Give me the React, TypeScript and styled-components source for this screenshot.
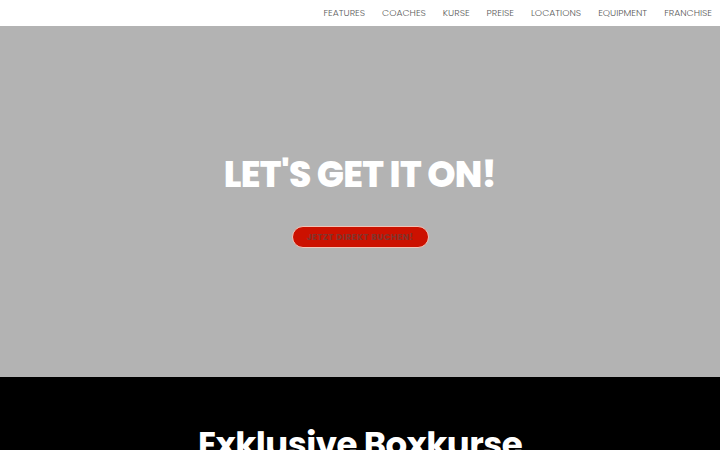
import React from 'react'
import styled, { createGlobalStyle } from 'styled-components'

const navItems = ['Features', 'Coaches', 'Kurse', 'Preise', 'Locations', 'Equipment', 'Franchise']

const GlobalStyle = createGlobalStyle`
  html, body {
    margin: 0;
    padding: 0;
    background: #000;
    font-family: Poppins, Inter, 'Noto Sans', sans-serif;
  }
  * {
    box-sizing: border-box;
  }
`

const App: React.FC = () => {
  return (
    <>
      <GlobalStyle />
      <Header>
        <Nav>
          {navItems.map((item) => (
            <NavLink key={item} href="#">
              {item}
            </NavLink>
          ))}
        </Nav>
      </Header>
      <Hero>
        <HeroTitle>LET'S GET IT ON!</HeroTitle>
        <BookButton>Jetzt direkt buchen!</BookButton>
      </Hero>
      <CoursesSection>
        <SectionTitle>Exklusive Boxkurse</SectionTitle>
      </CoursesSection>
    </>
  )
}

const Header = styled.header`
  height: 26px;
  background: #fff;
  display: flex;
  justify-content: flex-end;
  align-items: center;
  padding-right: 8px;
`

const Nav = styled.nav`
  display: flex;
  gap: 17px;
`

const NavLink = styled.a`
  font-family: Poppins, Inter, 'Noto Sans', sans-serif;
  font-size: 9.25px;
  font-weight: 300;
  color: #5c5c5c;
  text-transform: uppercase;
  text-decoration: none;
`

const Hero = styled.section`
  height: 351px;
  background: #b3b3b3;
  display: flex;
  flex-direction: column;
  align-items: center;
  padding-top: 125px;
`

const HeroTitle = styled.h1`
  margin: 0;
  font-family: Poppins, Inter, 'Noto Sans', sans-serif;
  font-size: 36px;
  font-weight: 800;
  line-height: 48px;
  color: #fff;
  letter-spacing: -0.7px;
`

const BookButton = styled.button`
  margin-top: 27px;
  width: 137px;
  height: 22px;
  border-radius: 11px;
  border: 1px solid #f2c4b8;
  background: #cc1100;
  color: #83342b;
  font-family: Poppins, Inter, 'Noto Sans', sans-serif;
  font-size: 8.6px;
  font-weight: 700;
  text-transform: uppercase;
  letter-spacing: 0.45px;
  cursor: pointer;
  padding: 0;
`

const CoursesSection = styled.section`
  background: #000;
  display: flex;
  justify-content: center;
  padding-top: 46px;
  height: 200px;
`

const SectionTitle = styled.h2`
  margin: 0;
  font-family: Poppins, Inter, 'Noto Sans', sans-serif;
  font-size: 34px;
  font-weight: 700;
  line-height: 42px;
  color: #fff;
  letter-spacing: -0.5px;
`

export default App
